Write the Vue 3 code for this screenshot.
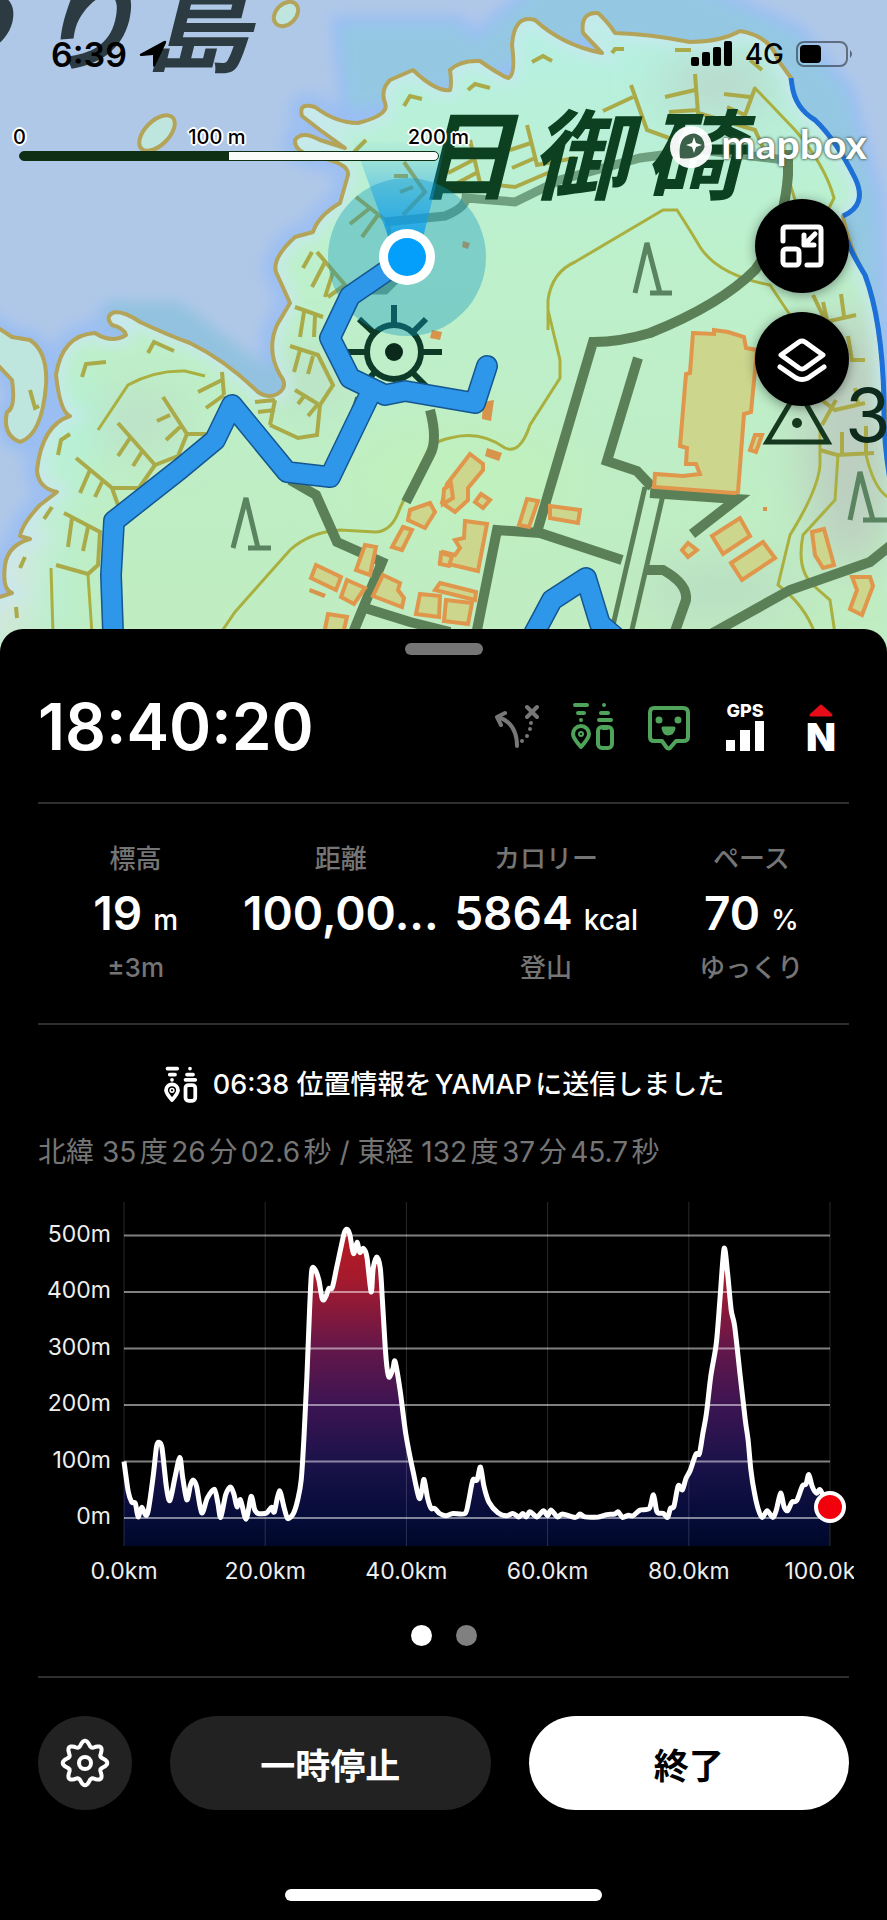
<script setup>
import { ref } from 'vue'

const stats = [
  { label: '標高', value: '19', unit: 'm', note: '±3m' },
  { label: '距離', value: '100,00...', unit: '', note: '' },
  { label: 'カロリー', value: '5864', unit: 'kcal', note: '登山' },
  { label: 'ペース', value: '70', unit: '%', note: 'ゆっくり' },
]

const page = ref(0)
const paused = ref(false)

// --- Elevation chart ---
// [distance km, elevation m]
const track = [
  [0, 100], [0.6, 47], [1.1, 28], [1.6, 26], [2, 2], [2.5, 19], [3, 6], [3.4, 11], [4.1, 70], [4.6, 126],
  [5, 134], [5.4, 123], [6, 55], [6.5, 31], [7.2, 70], [7.9, 107], [8.3, 73], [8.9, 32], [9.4, 58], [9.8, 67],
  [10.3, 55], [11, 9], [11.8, 35], [12.8, 51], [13.3, 26], [13.7, 1], [14.4, 41], [15.1, 55], [15.6, 41], [16, 20],
  [16.5, 32], [17.3, -2], [18, 38], [18.5, 15], [19, 8], [20.2, 9], [20.9, 19], [21.3, 11], [22, 48], [22.7, 17],
  [23.2, -1], [24, 8], [24.6, 32], [25.1, 67], [25.5, 144], [25.9, 250], [26.3, 374], [26.6, 439], [27.1, 439], [27.6, 421],
  [28.1, 387], [28.6, 392], [29, 406], [29.5, 408], [30.1, 442], [30.7, 477], [31.2, 505], [31.6, 511], [32, 501], [32.5, 468],
  [33, 488], [33.4, 470], [33.9, 477], [34.4, 462], [35, 400], [35.3, 442], [35.8, 462], [36.3, 442], [36.6, 386], [37, 303],
  [37.3, 262], [37.6, 249], [38.1, 265], [38.4, 277], [39.1, 227], [39.9, 150], [41, 79], [41.8, 35], [42.2, 50], [42.5, 68],
  [43, 35], [43.5, 17], [44, 17], [44.7, 8], [45.6, 4], [46.6, 8], [48.3, 8], [48.8, 29], [49.4, 67], [50, 67],
  [50.5, 90], [51, 55], [51.7, 28], [53, 9], [54.2, 4], [55.1, 8], [55.9, 2], [56.5, 8], [57, 2], [57.5, 11],
  [58.5, 2], [59.4, 13], [60, 4], [60.5, 14], [61.4, 2], [62.1, 7], [63.9, 1], [64.6, 7], [65.3, 2], [67.2, 2],
  [68.4, 6], [69.5, 7], [70, 11], [70.6, 1], [71.4, 5], [72.1, 4], [73.1, 14], [74.4, 17], [75, 41], [75.5, 11],
  [76.4, 8], [77, 1], [77.4, 17], [77.9, 21], [78.5, 57], [79.1, 50], [79.6, 70], [80.2, 84], [81, 113], [81.5, 114],
  [82, 150], [82.5, 185], [83.1, 250], [83.9, 309], [84.4, 386], [85, 477], [85.5, 433], [86, 368], [86.5, 339], [87.3, 250],
  [88, 173], [88.4, 138], [88.8, 85], [89.3, 44], [89.8, 17], [90.4, 1], [91.1, 13], [91.9, 1], [92.4, 14], [93, 44],
  [93.5, 20], [94, 13], [94.6, 28], [95.3, 31], [96.1, 57], [96.6, 60], [97, 77], [97.5, 55], [98.1, 44], [98.6, 50],
  [99.3, 32], [100, 19],
]

const chart = { left: 91, right: 797, top: 6, bottom: 350, zero: 322 }
const px = (km) => chart.left + (km / 100) * (chart.right - chart.left)
const py = (m) => chart.zero - m * 0.565

const smooth = (points) => {
  let d = `M${points[0][0]} ${points[0][1]}`
  for (let i = 0; i < points.length - 1; i++) {
    const a = points[Math.max(i - 1, 0)]
    const b = points[i]
    const c = points[i + 1]
    const e = points[Math.min(i + 2, points.length - 1)]
    const c1 = [b[0] + (c[0] - a[0]) / 7, b[1] + (c[1] - a[1]) / 7]
    const c2 = [c[0] - (e[0] - b[0]) / 7, c[1] - (e[1] - b[1]) / 7]
    d += `C${c1[0].toFixed(1)} ${c1[1].toFixed(1)} ${c2[0].toFixed(1)} ${c2[1].toFixed(1)} ${c[0].toFixed(1)} ${c[1].toFixed(1)}`
  }
  return d
}

const linePath = smooth(track.map(([km, m]) => [px(km), py(m)]))
const areaPath = `${linePath}V${chart.bottom}H${chart.left}Z`
const yTicks = [500, 400, 300, 200, 100, 0]
const xTicks = [0, 20, 40, 60, 80, 100]

// --- Gear outline, eight lobes ---
const gearPath = Array.from({ length: 96 }, (_, i) => {
  const t = (i / 96) * Math.PI * 2
  const r = 19.5 + 2.8 * Math.cos(8 * t)
  return `${i ? 'L' : 'M'}${(24 + r * Math.sin(t)).toFixed(2)} ${(24 - r * Math.cos(t)).toFixed(2)}`
}).join('') + 'Z'

// --- Map shapes ---
const land = 'M-10 600L12 593Q2 590 5 565Q8 545 30 539L20 536Q22 524 40 505L57 492Q38 488 37 470Q42 425 70 416Q60 412 56 375Q62 335 95 333Q112 344 126 335Q124 328 112 325Q104 316 115 312Q126 312 140 322Q170 336 190 343Q225 360 258 392Q270 400 280 392Q288 385 280 375Q266 350 277 325L290 303L276 272Q272 258 295 237L313 232Q318 216 340 203L348 175Q350 162 310 156Q294 150 295 140Q302 130 320 140L345 148L320 130L302 116Q298 102 315 107Q336 123 358 123Q390 115 385 103Q380 90 390 80L413 70Q436 92 450 90Q452 84 450 70Q460 60 480 61Q500 75 508 78Q516 76 512 45Q514 14 535 20Q562 45 602 53L583 33Q580 12 598 13Q608 22 615 33Q650 34 690 42Q720 42 740 31Q770 36 778 60L791 78L792 85Q795 108 815 120Q836 140 855 178Q868 205 843 216Q848 245 865 275Q882 320 884 400L900 480V680H-10Z'
const eastCoast = 'M791 78L792 85Q795 108 815 120Q836 140 855 178Q868 205 843 216M847 240Q851 252 865 275Q882 320 884 400Q883 440 890 480'
const leftIsle = 'M-5 326L12 337L30 340Q48 352 46 385Q42 435 20 442Q2 435 7 412Q16 408 12 380L-5 362Z'

const contours = [
  'M548 330V300Q552 272 575 262L663 210H677Q690 230 700 247Q718 275 770 285L790 315M548 310L560 360V378L530 425Q520 455 505 448Q480 430 450 438Q440 440 430 446L400 508Q392 532 375 532L340 530Q310 532 290 550L235 612L220 634',
  'M820 430V465Q818 490 790 535L778 585Q805 605 815 634',
  'M838 455L835 500L803 535Q796 570 814 586L830 600L835 634',
  'M98 430L128 385Q155 370 185 371L205 376',
  'M51 568L53 634M88 575L92 634',
  'M754 87L795 130Q825 165 834 198L828 210',
  'M780 150L795 200M866 455Q875 492 890 498',
]

const cliffs = [
  'M76 458L112 488L118 505M112 488H139L155 465M90 470L80 493M102 482L95 497',
  'M118 423L155 465L178 456L187 434M130 438L118 456M143 450L133 466',
  'M163 397L187 434H212M170 415L157 421M180 427L166 440',
  'M222 372L224 395M222 380L198 392M224 395L206 408',
  'M64 513L100 532L98 565L88 574L56 565M72 518L68 547M88 527L83 551',
  'M290 346L318 355L333 385L320 405L317 435L298 438L270 425M300 350L294 372M313 356L308 374',
  'M295 307L323 317M304 312L300 337M315 316L314 337',
  'M317 252L345 285L328 297M325 262L312 287M333 272L325 297M312 252L303 268',
  'M295 390L318 404M305 395L298 404M318 404L308 416M255 402L275 400M258 412L275 410M275 400L270 425',
  'M356 197L388 222L390 240M370 208L350 224M378 215L362 237',
  'M404 162L425 192L403 215M408 176L394 176M413 187L400 192M354 152L366 140',
  'M470 140L480 183L515 187L550 172M473 160L448 173M478 172L448 188',
  'M527 125L537 165L575 158M531 143L510 150M535 158L512 168',
  'M631 85L647 130L680 142M633 97L603 111',
  'M695 74L698 113L755 130L764 150M695 90L665 97M698 110L669 112',
  'M755 88L745 115L727 107M750 97L724 94',
  'M404 106L410 96L422 99M468 90L475 84L490 88M532 62L543 56L552 61M612 53L615 49H624M675 50H691M750 60L762 70',
  'M148 353L154 342L174 351M82 377L86 364L106 362M58 455L61 440L70 434M44 519L52 507M20 568L25 557M17 618L16 607M30 390L35 408L39 406',
  'M813 295L826 322L856 315M823 302L827 320M841 294L844 316M826 314L820 324M848 336L852 360H865',
  'M815 395L835 410L865 403M820 450L837 455L874 453M842 432V455M866 426V455M855 388L858 403M836 400L822 425',
]

const roads = [
  'M788 150V175Q784 230 755 270Q720 305 650 333Q620 342 593 342L537 532',
  'M638 358L607 461L637 471L652 487',
  'M475 640L497 530L540 533L622 560',
  'M650 493L737 499L692 534',
  'M645 570H663Q688 584 686 600L672 640',
  'M700 640L790 590L870 562L890 546',
  'M290 480L316 495L337 542L382 562L350 640M365 608L410 622L450 632',
  'M430 410Q438 440 430 455L406 502M360 398L354 418',
]

const buildings = [
  'M693 333L714 334V330L728 332L744 337L746 348L757 350L751 412L744 414L738 492L735 493L734 493L654 487L655 474L683 476L700 474L696 464H686L687 448L680 446L686 374L690 373Z',
  'M470 454L483 464V470L468 488V500L455 512L442 503L447 484Z',
  'M527 499L538 501L529 527L519 525Z',
  'M550 506L580 510L578 523L550 518Z',
  'M465 521L487 524L478 571L440 562L443 552L455 555L460 548L455 540L464 538Z',
  'M712 536L740 518L750 536L723 554Z',
  'M731 563L763 542L775 558L742 580Z',
  'M812 532L824 529L834 565L823 568L815 555Z',
  'M852 577H870L873 586L862 615L850 609L857 590Z',
  'M410 510L430 503L435 512L425 528L408 520Z',
  'M403 527L412 530L402 550L392 547Z',
  'M383 575L400 583L398 590L404 598L402 607L373 596Z',
  'M316 565L341 577L336 590L311 578Z',
  'M347 580L365 588L354 604L341 597Z',
  'M328 614L347 617L342 638L324 634Z',
  'M420 594L440 596L439 617L416 614Z',
  'M440 583L476 592L475 600L435 590Z',
  'M446 600L472 603L468 624L444 621Z',
  'M365 545L376 547L370 575L356 570Z',
  'M441 553L452 556L449 566L440 564Z',
  'M444 489L451 484L453 498L443 504Z',
  'M755 435L762 435L756 452L750 450Z',
  'M682 550L688 543L697 550L688 557Z',
  'M481 494L490 500L483 508L475 502Z',
]
</script>

<template>
  <div class="screen">
    <section class="map">
      <svg class="map-art" viewBox="0 0 887 652" preserveAspectRatio="xMidYMin slice" aria-hidden="true">
        <defs>
          <filter id="soft" x="-20%" y="-20%" width="140%" height="140%"><feGaussianBlur stdDeviation="7" /></filter>
          <filter id="haze" x="-50%" y="-50%" width="200%" height="200%"><feGaussianBlur stdDeviation="24" /></filter>
          <linearGradient id="landFill" x1="0" y1="0" x2="0" y2="1">
            <stop offset="0" stop-color="#b5f0e4" />
            <stop offset="0.35" stop-color="#bdf0cc" />
            <stop offset="1" stop-color="#c0ecbf" />
          </linearGradient>
          <linearGradient id="beam" x1="0" y1="1" x2="0" y2="0">
            <stop offset="0" stop-color="#0a9cf0" stop-opacity="0.9" />
            <stop offset="1" stop-color="#0a9cf0" stop-opacity="0" />
          </linearGradient>
          <clipPath id="landClip"><path :d="land" /></clipPath>
        </defs>

        <rect width="887" height="660" fill="#b0c8e8" />
        <g filter="url(#soft)">
          <path :d="land" fill="none" stroke="#9cbff2" stroke-width="26" stroke-linejoin="round" />
          <path d="M335 20H460L475 35L540 -20H690L800 30L850 90L880 200L887 420H860L780 80L600 40L450 90L345 118Z" fill="#94c8e2" stroke="#98bcf8" stroke-width="8" />
          <path d="M105 302H180L270 370L285 330V400H240L105 325Z" fill="#92c2df" />
          <path :d="leftIsle" fill="none" stroke="#98bdf2" stroke-width="20" />
        </g>

        <path :d="land" fill="url(#landFill)" />
        <g clip-path="url(#landClip)">
          <g filter="url(#haze)">
            <path d="M50 340L20 640H-20V560L40 430Z" fill="#dfe3ea" />
            <path d="M70 360L100 420L60 520L70 640H40V400Z" fill="#b3f2da" />
            <ellipse cx="720" cy="85" rx="60" ry="30" fill="#b9d8cc" />
            <ellipse cx="850" cy="440" rx="45" ry="130" fill="#bccdc0" />
            <ellipse cx="720" cy="590" rx="80" ry="26" fill="#b9dcc4" />
            <ellipse cx="140" cy="420" rx="40" ry="26" fill="#bcdcc8" />
            <ellipse cx="310" cy="380" rx="30" ry="24" fill="#bad9c6" />
            <ellipse cx="460" cy="480" rx="120" ry="60" fill="#c0f0be" />
          </g>
          <path :d="land" class="coast-glow" filter="url(#soft)" />
        </g>
        <path :d="land" class="coast" />
        <path :d="eastCoast" class="coast-blue" />
        <path :d="leftIsle" class="coast isle" />
        <ellipse cx="157" cy="133" rx="22" ry="12" transform="rotate(-45 157 133)" class="coast isle" />
        <ellipse cx="286" cy="14" rx="14" ry="10" transform="rotate(-45 286 14)" class="coast isle" />

        <path v-for="d in contours" :key="d" :d="d" class="contour" />
        <path v-for="d in cliffs" :key="d" :d="d" class="cliff" />
        <path d="M385 222L445 216Q465 208 466 198L515 202L560 180L640 158L700 150L785 160M370 290H385L405 270" class="road faint" />
        <path v-for="d in roads" :key="d" :d="d" class="road" />
        <path d="M645 487L611 634M663 495L631 634" class="road thin" />
        <path v-for="d in buildings" :key="d" :d="d" class="building" />
        <path d="M483 402L494 400L491 421L482 419ZM487 448L502 453L499 461L485 456ZM310 588L326 594L324 598L309 592ZM763 507H767V511H763ZM463 241L470 243L468 249L462 247ZM432 330L442 332L440 340L430 338Z" fill="#d8944b" />

        <!-- Conifer marks, benchmark and lighthouse -->
        <path d="M635 293L647 243L660 293M650 293H672M233 548L246 498L258 548M248 548H271M850 520L860 472L873 520M863 520H890" class="conifer" />
        <path d="M767 442L798 390L828 442Z" class="benchmark" />
        <circle cx="797" cy="423" r="5" fill="#16381f" />
        <circle cx="394" cy="352" r="27" class="lighthouse" />
        <path d="M394 325V305M412 333L426 319M421 352H442M412 372L428 388M375 372L362 386M367 352H346M374 333L359 319" class="lighthouse" />
        <circle cx="394" cy="352" r="9" fill="#0b2a1c" />

        <g class="place">
          <text x="-94" y="62">つ</text>
          <text x="34" y="62">り</text>
          <text x="146" y="64">島</text>
        </g>
        <g class="place cape">
          <text x="416" y="192">日</text>
          <text x="530" y="192">御</text>
          <text x="644" y="192">碕</text>
        </g>
        <text x="845" y="442" class="height">3</text>

        <circle cx="407" cy="257" r="79" fill="#0a97c0" fill-opacity="0.36" />
        <path d="M393 250L353 140H447L420 250Z" fill="url(#beam)" />
        <g class="route">
          <path d="M407 257L350 296L330 338L350 378L385 395L405 391L475 403L487 366M372 390L330 477L287 472L232 405L215 440L180 469L114 521L111 575L114 660" class="route-edge" />
          <path d="M520 660L552 600L586 578L600 624L630 650" class="route-edge" />
          <path d="M407 257L350 296L330 338L350 378L385 395L405 391L475 403L487 366M372 390L330 477L287 472L232 405L215 440L180 469L114 521L111 575L114 660" />
          <path d="M520 660L552 600L586 578L600 624L630 650" />
        </g>
        <circle cx="407" cy="257" r="28" fill="#fff" />
        <circle cx="407" cy="257" r="19" fill="#039ffb" />
      </svg>

      <header class="status-bar">
        <div class="clock">
          <span>6:39</span>
          <svg width="28" height="28" viewBox="0 0 28 28" aria-hidden="true"><path d="M1 14L25 1Q28 0 27 3L16 26Q14 28 14 25V15L3 16Q0 16 1 14Z" /></svg>
        </div>
        <div class="signal">
          <svg width="42" height="26" viewBox="0 0 42 26" aria-hidden="true">
            <rect x="0" y="16" width="8" height="9" rx="2" />
            <rect x="11" y="11" width="8" height="14" rx="2" />
            <rect x="22" y="6" width="8" height="19" rx="2" />
            <rect x="33" y="0" width="8" height="25" rx="2" />
          </svg>
          <span>4G</span>
          <svg width="58" height="26" viewBox="0 0 58 26" aria-hidden="true">
            <rect x="1" y="1" width="50" height="24" rx="7" fill="none" stroke="#000" stroke-opacity="0.45" stroke-width="2" />
            <rect x="4" y="4" width="21" height="18" rx="4" />
            <path d="M54 9Q58 13 54 17Z" fill-opacity="0.5" />
          </svg>
        </div>
      </header>

      <div class="map-tools">
        <div class="scale">
          <div class="scale-labels"><span>0</span><span>100 m</span><span>200 m</span></div>
          <div class="scale-bar"></div>
        </div>
        <div class="side">
          <a class="mapbox" href="#">
            <svg width="44" height="44" viewBox="0 0 44 44" aria-hidden="true">
              <circle cx="22" cy="22" r="21" fill="#fff" fill-opacity="0.95" />
              <path d="M11 33Q9 16 17 11Q26 5 33 13Q39 22 31 29Q24 35 11 33Z" fill="#3c604a" />
              <path d="M25 12L27 18L33 20L27 22L25 28L23 22L17 20L23 18Z" fill="#fff" />
            </svg>
            <span>mapbox</span>
          </a>
          <button class="round-btn" aria-label="地図を縮小">
            <svg viewBox="0 0 94 94" aria-hidden="true">
              <path d="M28 42V31Q28 28 31 28H63Q66 28 66 31V63Q66 66 63 66H52" />
              <rect x="28" y="50" width="16" height="16" rx="3" />
              <path d="M60 35L50 45M49 36V46H59" />
            </svg>
          </button>
          <button class="round-btn" aria-label="レイヤー">
            <svg viewBox="0 0 94 94" aria-hidden="true">
              <path d="M26 43L44 30Q47 28 50 30L68 43L50 56Q47 58 44 56Z" />
              <path d="M25 55L41 66Q47 69 53 66L69 55" />
            </svg>
          </button>
        </div>
      </div>
    </section>

    <main class="sheet">
      <div class="grip"></div>

      <div class="summary">
        <h1 class="elapsed">18:40:20</h1>
        <div class="icons">
          <svg viewBox="0 0 48 48" class="icon grey" aria-label="ルート">
            <path d="M5 14Q24 20 24 43M12 10L4 14L8 22M34 4L44 14M44 4L34 14" />
            <path d="M38 20V20M37 26V26M34 33V33M29 38V38" />
          </svg>
          <svg viewBox="0 0 48 48" class="icon green" aria-label="位置共有">
            <path d="M6 2H18M9 10H15M12 17V17M35 2V2M32 10H39M30 17H42" />
            <path d="M12 44Q4 35 4 31A8 8 0 0 1 20 31Q20 35 12 44Z" />
            <circle cx="12" cy="31" r="1" />
            <rect x="29" y="24" width="14" height="21" rx="4" />
            <path d="M34 25H38" />
          </svg>
          <svg viewBox="0 0 48 48" class="icon green" aria-label="フィールドメモ">
            <path d="M9 5H38Q43 5 43 10V34Q43 38 38 38H31L25 45Q24 46 22 45L17 38H9Q5 38 5 34V10Q5 5 9 5Z" />
            <path d="M14 17V17M33 17V17" class="eyes" />
            <path d="M18 25H29Q28 31 23 31Q19 31 18 25Z" class="solid" />
          </svg>
          <svg viewBox="0 0 48 48" class="icon white" aria-label="GPS">
            <text x="24" y="14" class="gps">GPS</text>
            <path d="M5 37H14V48H5ZM19 27H29V48H19ZM34 18H43V48H34Z" />
          </svg>
          <svg viewBox="0 0 48 48" class="icon white" aria-label="方位">
            <path d="M24 3L34 12H14Z" class="north" />
            <text x="24" y="48" class="compass">N</text>
          </svg>
        </div>
      </div>

      <hr />

      <dl class="stats">
        <div v-for="s in stats" :key="s.label" class="stat">
          <dt>{{ s.label }}</dt>
          <dd class="value">{{ s.value }}<small v-if="s.unit">{{ s.unit }}</small></dd>
          <dd class="note">{{ s.note }}</dd>
        </div>
      </dl>

      <hr />

      <p class="sent">
        <svg viewBox="0 0 48 48" class="icon small" aria-hidden="true">
          <path d="M6 2H19M9 10H16M12 17V17M36 2V2M32 10H40M30 17H43" />
          <path d="M12 44Q4 35 4 31A8 8 0 0 1 20 31Q20 35 12 44Z" />
          <circle cx="12" cy="31" r="1" />
          <rect x="30" y="24" width="13" height="21" rx="4" />
        </svg>
        06:38 位置情報をYAMAPに送信しました
      </p>
      <p class="coords">北緯 35度26分02.6秒 / 東経 132度37分45.7秒</p>

      <svg class="chart" viewBox="0 0 821 394" role="img" aria-label="標高グラフ">
        <defs>
          <linearGradient id="elev" gradientUnits="userSpaceOnUse" x1="0" y1="40" x2="0" y2="350">
            <stop offset="0" stop-color="#b61a22" />
            <stop offset="0.15" stop-color="#a31a2e" />
            <stop offset="0.36" stop-color="#64174a" />
            <stop offset="0.55" stop-color="#3b1452" />
            <stop offset="0.73" stop-color="#1b124a" />
            <stop offset="0.91" stop-color="#050c38" />
            <stop offset="1" stop-color="#00082a" />
          </linearGradient>
        </defs>
        <path :d="areaPath" fill="url(#elev)" />
        <line v-for="km in xTicks" :key="'v' + km" :x1="px(km)" :x2="px(km)" :y1="chart.top" :y2="chart.bottom" class="grid-v" />
        <line v-for="m in yTicks" :key="'h' + m" :x1="chart.left" :x2="chart.right" :y1="py(m)" :y2="py(m)" class="grid-h" />
        <path :d="linePath" class="profile" />
        <circle cx="797" cy="311" r="14" class="here" />
        <text v-for="m in yTicks" :key="'y' + m" x="78" :y="py(m) + 6" class="y-label">{{ m }}m</text>
        <text v-for="km in xTicks" :key="'x' + km" :x="px(km)" y="383" class="x-label">{{ km.toFixed(1) }}km</text>
      </svg>

      <div class="pager">
        <button v-for="n in 2" :key="n" :class="['dot', { active: page === n - 1 }]" :aria-label="`${n}ページ`" @click="page = n - 1"></button>
      </div>

      <hr />

      <div class="actions">
        <button class="settings" aria-label="設定">
          <svg viewBox="0 0 48 48" aria-hidden="true">
            <path :d="gearPath" />
            <circle cx="24" cy="24" r="6" />
          </svg>
        </button>
        <button class="pill" @click="paused = !paused">{{ paused ? '再開' : '一時停止' }}</button>
        <button class="pill finish">終了</button>
      </div>

      <div class="home-bar"></div>
    </main>
  </div>
</template>

<style>
body {
  margin: 0;
  background: #000;
}
</style>

<style scoped>
.screen {
  min-height: 100vh;
  background: #000;
  color: #fff;
  font-family: Inter, "Noto Sans CJK JP", sans-serif;
}

button {
  padding: 0;
  border: 0;
  font: inherit;
  cursor: pointer;
}

/* Map */
.map {
  position: relative;
  height: 652px;
  overflow: hidden;
  color: #000;
}
.map-art {
  position: absolute;
  inset: 0;
  width: 100%;
  height: 100%;
}
.coast { fill: none; stroke: #b3a45a; stroke-width: 4; stroke-linejoin: round; }
.coast.isle { fill: #bfe6de; }
.coast-glow { fill: none; stroke: #c8e8ee; stroke-width: 14; }
.coast-blue { fill: none; stroke: #1c70d8; stroke-width: 5; }
.contour { fill: none; stroke: #aab040; stroke-width: 3; }
.cliff { fill: none; stroke: #aaaa48; stroke-width: 4; }
.road { fill: none; stroke: #5b8057; stroke-width: 10; }
.road.thin { stroke-width: 5; }
.road.faint { stroke: #6fa080; stroke-width: 9; }
.building { fill: #ccd68c; stroke: #e0974c; stroke-width: 4; }
.conifer { fill: none; stroke: #5a8360; stroke-width: 5; }
.benchmark { fill: none; stroke: #16381f; stroke-width: 5; }
.lighthouse { fill: none; stroke: #0e3a28; stroke-width: 6; }
.place {
  font-family: "Noto Sans CJK JP", sans-serif;
  font-size: 104px;
  font-style: italic;
  font-weight: 700;
  fill: #2c3b42;
}
.cape { font-size: 98px; fill: #0d4020; }
.height { font-size: 74px; fill: #0d2a1c; }
.route path {
  fill: none;
  stroke: #2e97ea;
  stroke-width: 19;
  stroke-linejoin: round;
  stroke-linecap: round;
}
.route .route-edge { stroke: #14568f; stroke-width: 22; }

.status-bar {
  position: relative;
  display: flex;
  justify-content: space-between;
  align-items: center;
  padding: 34px 33px 0 51px;
  height: 40px;
}
.clock, .signal {
  display: flex;
  align-items: center;
  gap: 12px;
}
.clock { font-size: 34px; font-weight: 600; }
.signal { font-size: 28px; font-weight: 500; }

.map-tools {
  position: relative;
  display: flex;
  justify-content: space-between;
  align-items: flex-start;
  padding: 50px 20px 0 19px;
}
.scale { width: 420px; }
.scale-labels {
  display: flex;
  justify-content: space-between;
  margin: 0 -30px 0 -6px;
  font-size: 20px;
  line-height: 27px;
  font-weight: 500;
  text-shadow: 2px 0 #fff, -2px 0 #fff, 0 2px #fff, 0 -2px #fff, 1px 1px #fff, -1px -1px #fff, 1px -1px #fff, -1px 1px #fff;
}
.scale-bar {
  height: 8px;
  border: 1px solid #0f2f14;
  border-radius: 5px;
  background: linear-gradient(90deg, #0f2f14 50%, #fafcfa 50%);
}
.side {
  display: flex;
  flex-direction: column;
  align-items: flex-end;
  gap: 19px;
}
.mapbox {
  display: flex;
  align-items: center;
  gap: 8px;
  margin-bottom: 10px;
  height: 46px;
  color: #fff;
  font-family: Lato, sans-serif;
  font-size: 41px;
  line-height: 40px;
  font-weight: 700;
  text-decoration: none;
  text-shadow: 0 0 3px #46604c, 0 0 3px #46604c;
}
.mapbox span { padding-bottom: 6px; }
.round-btn {
  width: 94px;
  height: 94px;
  margin-right: 18px;
  border-radius: 50%;
  background: #000;
  box-shadow: 0 2px 12px rgba(0, 0, 0, 0.4);
}
.round-btn svg, .settings svg {
  display: block;
  fill: none;
  stroke: #fff;
  stroke-width: 5;
  stroke-linecap: round;
  stroke-linejoin: round;
}

/* Bottom sheet */
.sheet {
  position: relative;
  margin-top: -23px;
  padding: 14px 33px 19px;
  border-radius: 23px 23px 0 0;
  background: #000;
}
.grip {
  width: 78px;
  height: 12px;
  margin: 0 auto;
  border-radius: 6px;
  background: #757575;
}
hr {
  height: 2px;
  margin: 0 5px;
  border: 0;
  background: #2e2e2e;
}
.summary {
  display: flex;
  justify-content: space-between;
  align-items: center;
  height: 143px;
  padding: 0 9px 4px 5px;
}
.elapsed {
  margin: 0;
  font-size: 64px;
  line-height: 76px;
  font-weight: 600;
}
.icons { display: flex; gap: 28px; }
.icon {
  width: 48px;
  height: 48px;
  overflow: visible;
  fill: none;
  stroke: currentColor;
  stroke-width: 4;
  stroke-linecap: round;
  stroke-linejoin: round;
}
.grey { color: #777; }
.green { color: #4fa35a; }
.eyes { stroke-width: 7; }
.solid { fill: currentColor; stroke-width: 3; }
.white { fill: #fff; stroke: none; }
.white text { text-anchor: middle; }
.gps { font-size: 18px; font-weight: 800; }
.compass { font-size: 39px; font-weight: 900; }
.north { fill: #e60c18; stroke: #e60c18; stroke-width: 3; }

.stats {
  display: grid;
  grid-template-columns: repeat(4, 1fr);
  margin: 0;
  padding: 37px 0;
  text-align: center;
}
.stat dt, .stat .note {
  height: 36px;
  margin: 0;
  color: #757575;
  font-size: 26px;
  line-height: 36px;
  font-weight: 500;
}
.stat .value {
  height: 73px;
  margin: 0;
  font-size: 46px;
  line-height: 73px;
  font-weight: 600;
  white-space: nowrap;
}
.value small {
  margin-left: 11px;
  font-size: 28px;
  font-weight: 500;
}

.sent {
  display: flex;
  justify-content: center;
  align-items: center;
  gap: 14px;
  margin: 40px 0 27px;
  font-size: 27px;
  line-height: 40px;
  font-weight: 500;
  text-autospace: normal;
}
.icon.small { width: 36px; height: 36px; stroke-width: 5; }
.coords {
  margin: 0 5px 24px;
  color: #757575;
  font-size: 28px;
  line-height: 40px;
  text-autospace: normal;
}

.chart {
  display: block;
  width: 100%;
  font-size: 23px;
  fill: #eee;
}
.grid-v { stroke: #fff; stroke-opacity: 0.16; stroke-width: 1; }
.grid-h { stroke: #fff; stroke-opacity: 0.5; stroke-width: 2; }
.profile { fill: none; stroke: #fff; stroke-width: 5; stroke-linejoin: round; }
.here { fill: #f2000c; stroke: #fff; stroke-width: 4; }
.y-label { text-anchor: end; }
.x-label { text-anchor: middle; }

.pager {
  display: flex;
  justify-content: center;
  gap: 24px;
  padding: 35px 0 30px;
}
.dot {
  width: 21px;
  height: 21px;
  border-radius: 50%;
  background: #808080;
}
.dot.active { background: #fff; }

.actions {
  display: flex;
  gap: 38px;
  padding: 38px 5px 79px;
}
.settings {
  flex: none;
  display: grid;
  place-items: center;
  width: 94px;
  height: 94px;
  border-radius: 50%;
  background: #222;
}
.settings svg { width: 48px; height: 48px; stroke-width: 4; overflow: visible; }
.actions .pill {
  flex: 1;
  height: 94px;
  border-radius: 47px;
  background: #222;
  color: #fff;
  font-size: 35px;
  font-weight: 700;
}
.actions .finish {
  background: #fff;
  color: #000;
}
.home-bar {
  width: 317px;
  height: 12px;
  margin: 0 auto;
  border-radius: 6px;
  background: #fff;
}
</style>
